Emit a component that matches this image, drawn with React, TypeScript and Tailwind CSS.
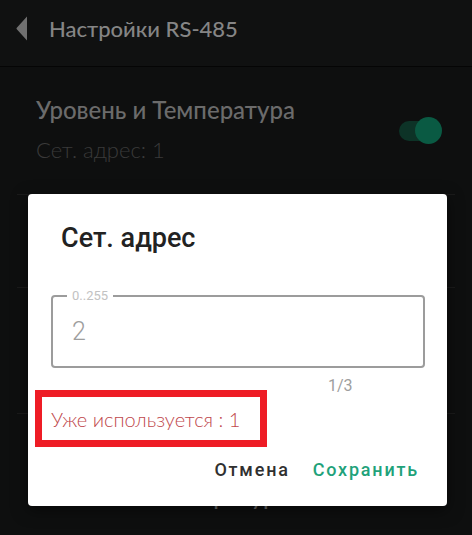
import React from "react";

const geo = "font-['Lato','Noto_Sans',sans-serif]";
const roboto = "font-['Roboto','Noto_Sans',sans-serif]";

const BackIcon = () => (
  <svg width="12" height="25" viewBox="0 0 12 25" className="shrink-0">
    <path d="M11 0.5 L11 24.5 L0.8 13.3 Q0 12.5 0.8 11.7 Z" fill="#707070" />
  </svg>
);

const Toggle = () => (
  <div className="flex items-center">
    <div className="h-[20px] w-[37px] rounded-full bg-[#0d3327]" />
    <div className="-ml-[21px] h-[27px] w-[27px] rounded-full bg-[#0a5a43]" />
  </div>
);

export default function App() {
  return (
    <div className="relative h-[535px] w-[472px] overflow-hidden bg-[#0e0f0f]">
      {/* toolbar */}
      <header className="flex h-[67px] items-center border-b border-[#050505] bg-[#101111] pb-[9px] pl-[16px]">
        <BackIcon />
        <span className={`${geo} ml-[21px] text-[22px] font-medium leading-[32px] text-[#858585]`}>
          Настройки RS-485
        </span>
      </header>

      {/* settings list */}
      <div className="mx-[17px] flex h-[128px] items-start justify-between border-b border-[#1b1b1b] pl-[19px] pr-[13px] pt-[27px]">
        <div className={geo}>
          <div className="text-[24px] font-medium leading-[32px] text-[#6b6b6b]">Уровень и Температура</div>
          <div className="mt-[9px] text-[22px] font-light leading-[30px] text-[#3a3a3a]">Сет. адрес: 1</div>
        </div>
        <div className="mt-[23px]">
          <Toggle />
        </div>
      </div>
      <div className="mx-[17px] h-[93px] border-b border-[#1b1b1b]" />
      <div className="mx-[17px] h-[126px] border-b border-[#1b1b1b]" />
      <div className={`${geo} mx-[17px] pl-[129px] pt-[66px] text-[24px] font-medium leading-[32px] text-[#6b6b6b]`}>
        Температура
      </div>

      {/* address dialog */}
      <div className="absolute left-[28px] top-[194px] h-[312px] w-[419px] rounded-[4px] bg-white shadow-[0_4px_16px_rgba(0,0,0,0.5)]">
        <h2 className={`${roboto} ml-[33px] mt-[28px] text-[27px] font-medium leading-[32px] text-[#222222]`}>
          Сет. адрес
        </h2>

        <div className="relative ml-[23px] mt-[41px] flex h-[73px] w-[374px] items-center rounded-[4px] border-2 border-[#9c9c9c] pl-[19px]">
          <span className={`${roboto} absolute -top-[9px] left-[14px] bg-white px-[5px] text-[13px] leading-[16px] text-[#c2c2c2]`}>
            0..255
          </span>
          <span className={`${roboto} text-[25px] font-light leading-[30px] text-[#9e9e9e]`}>2</span>
        </div>

        <div className={`${roboto} ml-[300px] mt-[8px] text-[16px] leading-[20px] text-[#9e9e9e]`}>1/3</div>

        <div className="-mt-[6px] ml-[7px] flex h-[57px] w-[232px] items-center border-[7px] border-[#ee1c25] pl-[9px]">
          <span className={`${geo} whitespace-nowrap text-[20px] font-light leading-[28px] text-[#c0484c]`}>
            Уже используется : 1
          </span>
        </div>

        <div className={`${roboto} mt-[11px] flex justify-end gap-[23px] pr-[28px] text-[18px] font-medium leading-[24px] tracking-[0.1em]`}>
          <button className="text-[#303030]">Отмена</button>
          <button className="text-[#1fa27a]">Сохранить</button>
        </div>
      </div>
    </div>
  );
}
